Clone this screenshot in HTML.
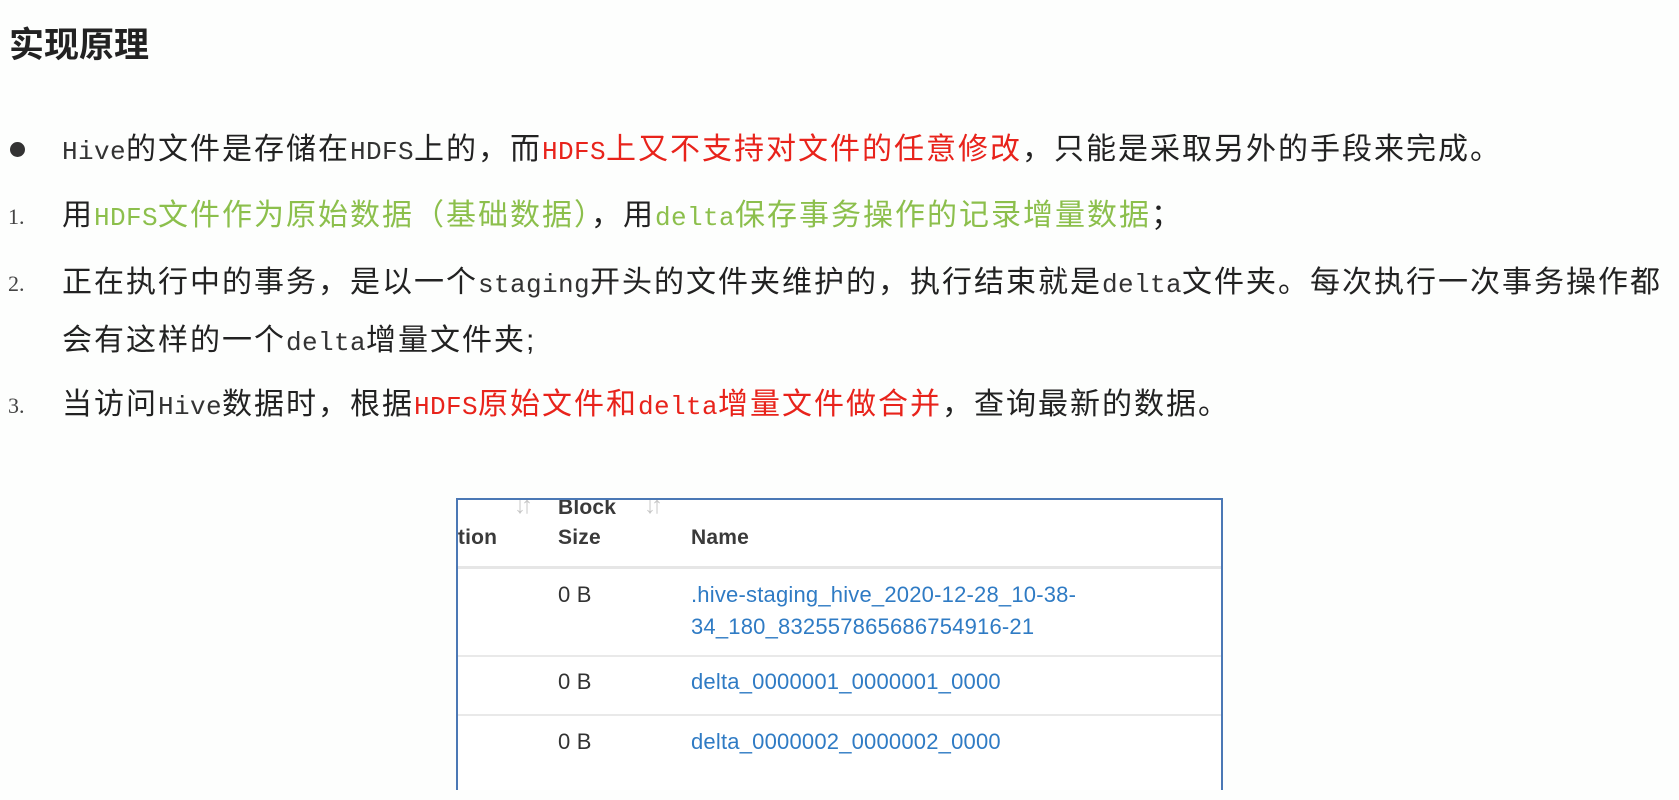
<!DOCTYPE html>
<html><head><meta charset="utf-8"><style>
body{margin:0;width:1679px;height:800px;background:#fdfefd;position:relative;overflow:hidden;font-family:"Liberation Sans","Noto Sans CJK SC",sans-serif;color:#222;}
.t{position:absolute;left:9px;top:17px;font-size:35px;font-weight:bold;color:#222;}
.l{position:absolute;left:62px;font-size:30px;letter-spacing:2px;white-space:nowrap;line-height:40px;}
.m{font-family:"Liberation Mono",monospace;font-size:26px;letter-spacing:0.4px;color:#333;}
.n{position:absolute;left:8px;font-family:"Liberation Serif",serif;font-size:22px;color:#444;line-height:40px;}
.r{color:#e8231b}.r .m{color:#e8231b}
.g{color:#8cbf4c}.g .m{color:#8cbf4c}
.dot{position:absolute;left:10px;top:142px;width:15px;height:15px;border-radius:50%;background:#333;}
.box{position:absolute;left:456px;top:498px;width:763px;height:290px;border:2px solid #4b78b5;border-bottom:none;overflow:hidden;background:#fff;font-family:"Liberation Sans",sans-serif;font-size:22px;letter-spacing:0.2px;color:#333;}
.box div{position:absolute;white-space:nowrap;}
.b{font-weight:bold;color:#3a3a3a;font-size:21px}
.hl{left:0;right:0;height:3px;background:#e6e6e6;}
.rl{left:0;right:0;height:2px;background:#e9e9e9;}
.a{color:#2f7bc4}
.ar{color:#c8c8c8;font-size:24px;letter-spacing:-5px}
</style></head><body>
<div class="t">实现原理</div>
<div class="dot"></div>
<div class="l" style="top:130px"><span class="m">Hive</span>的文件是存储在<span class="m">HDFS</span>上的，而<span class="r"><span class="m">HDFS</span>上又不支持对文件的任意修改</span>，只能是采取另外的手段来完成。</div>
<div class="n" style="top:197px">1.</div>
<div class="l" style="top:196px">用<span class="g"><span class="m">HDFS</span>文件作为原始数据（基础数据）</span>，用<span class="g"><span class="m">delta</span>保存事务操作的记录增量数据</span>；</div>
<div class="n" style="top:264px">2.</div>
<div class="l" style="top:263px">正在执行中的事务，是以一个<span class="m">staging</span>开头的文件夹维护的，执行结束就是<span class="m">delta</span>文件夹。每次执行一次事务操作都</div>
<div class="l" style="top:321px">会有这样的一个<span class="m">delta</span>增量文件夹;</div>
<div class="n" style="top:386px">3.</div>
<div class="l" style="top:385px">当访问<span class="m">Hive</span>数据时，根据<span class="r"><span class="m">HDFS</span>原始文件和<span class="m">delta</span>增量文件做合并</span>，查询最新的数据。</div>
<div class="box">
<div class="b" style="left:-12px;top:26px">ation</div>
<div class="ar" style="left:56px;top:-8px">↓↑</div>
<div class="b" style="left:100px;top:-4px">Block</div>
<div class="b" style="left:100px;top:26px">Size</div>
<div class="ar" style="left:186px;top:-8px">↓↑</div>
<div class="b" style="left:233px;top:26px">Name</div>
<div class="hl" style="top:66px"></div>
<div style="left:100px;top:82px">0 B</div>
<div class="a" style="left:233px;top:82px">.hive-staging_hive_2020-12-28_10-38-</div>
<div class="a" style="left:233px;top:114px">34_180_832557865686754916-21</div>
<div class="rl" style="top:155px"></div>
<div style="left:100px;top:169px">0 B</div>
<div class="a" style="left:233px;top:169px">delta_0000001_0000001_0000</div>
<div class="rl" style="top:214px"></div>
<div style="left:100px;top:229px">0 B</div>
<div class="a" style="left:233px;top:229px">delta_0000002_0000002_0000</div>
</div>
</body></html>
